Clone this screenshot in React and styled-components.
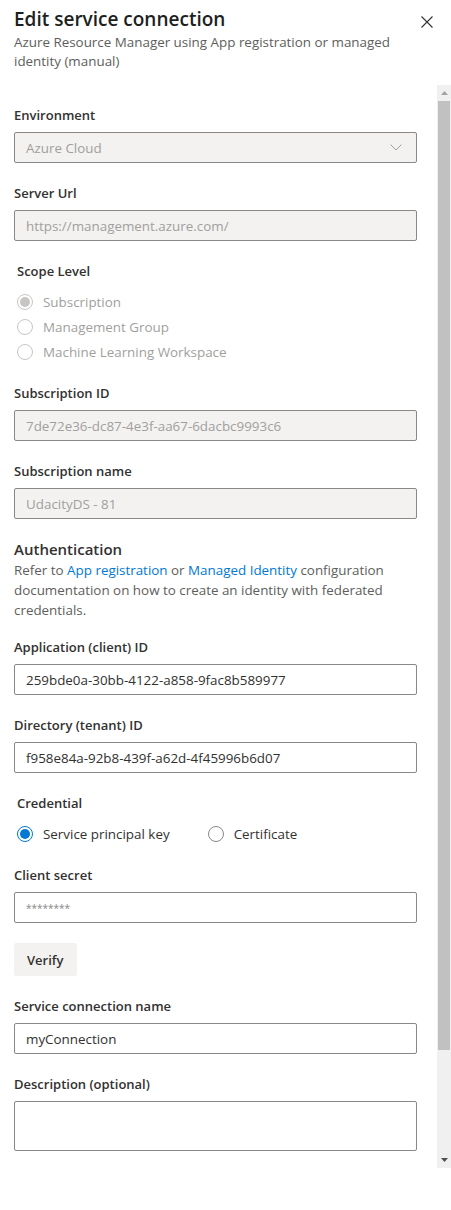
import React from "react";
import styled, { createGlobalStyle } from "styled-components";

const GlobalStyle = createGlobalStyle`
  html, body {
    margin: 0;
    padding: 0;
    background: #ffffff;
  }
  body {
    font-family: "Open Sans", "Noto Sans", sans-serif;
    color: #323130;
  }
  * {
    box-sizing: border-box;
  }
`;

const Panel = styled.div`
  width: 451px;
  height: 1210px;
  display: flex;
  flex-direction: column;
  background: #fff;
  overflow: hidden;
`;

const Header = styled.header`
  display: flex;
  justify-content: space-between;
  align-items: flex-start;
  padding: 5px 18px 14px 14px;
`;

const HeaderText = styled.div`
  display: flex;
  flex-direction: column;
  max-width: 396px;
`;

const Title = styled.h1`
  margin: 0;
  font-size: 19px;
  font-weight: 600;
  line-height: 28px;
  color: #201f1e;
`;

const Subtitle = styled.p`
  margin: 0;
  font-size: 13.4px;
  line-height: 19px;
  color: #605e5c;
`;

const CloseButton = styled.button`
  margin-top: 11px;
  width: 12px;
  height: 12px;
  padding: 0;
  border: none;
  background: none;
  display: flex;
  color: #323130;
`;

const Body = styled.div`
  display: flex;
  height: 1083px;
`;

const Scroller = styled.div`
  flex: 1;
  overflow: hidden;
  padding: 20px 20px 0 14px;
`;

const ScrollBar = styled.div`
  width: 14px;
  display: flex;
  flex-direction: column;
  background: #f0f0f0;
`;

const ScrollArrow = styled.div`
  height: ${(p) => p.$h}px;
  display: flex;
  align-items: center;
  justify-content: center;
`;

const ScrollThumb = styled.div`
  height: 949px;
  margin: 0 1px;
  background: #c1c1c1;
`;

const ScrollTrack = styled.div`
  flex: 1;
`;

const Field = styled.div`
  margin-bottom: 20px;
`;

const Label = styled.div`
  font-size: 13px;
  font-weight: 600;
  line-height: 20px;
  margin-bottom: ${(p) => (p.$group ? 8 : 7)}px;
  padding-left: ${(p) => (p.$group ? 3 : 0)}px;
  color: #323130;
`;

const InputBox = styled.div`
  width: 403px;
  height: ${(p) => p.$h || 31}px;
  display: flex;
  align-items: ${(p) => (p.$multi ? "flex-start" : "center")};
  justify-content: space-between;
  padding: 0 14px 0 11px;
  border: 1px solid #8a8886;
  border-radius: 2px;
  background: ${(p) => (p.$disabled ? "#f3f2f1" : "#ffffff")};
  color: ${(p) => (p.$disabled ? "#a19f9d" : "#323130")};
  font-size: 13.4px;
`;

const Masked = styled.span`
  color: #8a8886;
  font-size: 10px;
`;

const ChoiceGroup = styled.div`
  margin-bottom: ${(p) => p.$mb || 20}px;
`;

const Options = styled.div`
  display: flex;
  flex-direction: ${(p) => (p.$row ? "row" : "column")};
  gap: ${(p) => (p.$row ? 38 : 0)}px;
  padding-left: 3px;
`;

const Option = styled.label`
  height: 25px;
  display: flex;
  align-items: center;
  gap: 10px;
  font-size: 13.4px;
  color: ${(p) => (p.$disabled ? "#a19f9d" : "#323130")};
`;

const RadioCircle = styled.span`
  width: 16px;
  height: 16px;
  border-radius: 50%;
  flex-shrink: 0;
  border: 1px solid
    ${(p) => (p.$disabled ? "#c8c6c4" : p.$checked ? "#0078d4" : "#8a8886")};
  display: flex;
  align-items: center;
  justify-content: center;

  &::after {
    content: "";
    display: ${(p) => (p.$checked ? "block" : "none")};
    width: 10px;
    height: 10px;
    border-radius: 50%;
    background: ${(p) => (p.$disabled ? "#c8c6c4" : "#0078d4")};
  }
`;

const SectionTitle = styled.h2`
  margin: 0;
  font-size: 15px;
  font-weight: 600;
  line-height: 21px;
  color: #323130;
`;

const SectionText = styled.p`
  margin: 0 0 17px;
  font-size: 13.4px;
  line-height: 20px;
  color: #605e5c;
`;

const Link = styled.a`
  color: #0078d4;
  text-decoration: none;
`;

const Button = styled.button`
  height: 33px;
  padding: 0 13px;
  margin-bottom: 20px;
  border: none;
  border-radius: 2px;
  background: #f3f2f1;
  font-family: inherit;
  font-size: 13px;
  font-weight: 600;
  color: #323130;
`;

const Chevron = () => (
  <svg width="12" height="7" viewBox="0 0 12 7" fill="none">
    <path d="M0.5 0.5 L6 6 L11.5 0.5" stroke="#a19f9d" strokeWidth="1" />
  </svg>
);

const TextField = ({ label, value, disabled, h, multi, children }) => (
  <Field>
    <Label>{label}</Label>
    <InputBox $disabled={disabled} $h={h} $multi={multi}>
      {value}
      {children}
    </InputBox>
  </Field>
);

const Radio = ({ label, checked, disabled }) => (
  <Option $disabled={disabled}>
    <RadioCircle $checked={checked} $disabled={disabled} />
    {label}
  </Option>
);

export default function App() {
  return (
    <>
      <GlobalStyle />
      <Panel>
        <Header>
          <HeaderText>
            <Title>Edit service connection</Title>
            <Subtitle>
              Azure Resource Manager using App registration or managed identity
              (manual)
            </Subtitle>
          </HeaderText>
          <CloseButton aria-label="Close">
            <svg width="12" height="12" viewBox="0 0 12 12">
              <path d="M0.5 0.5 L11.5 11.5 M11.5 0.5 L0.5 11.5" stroke="#323130" strokeWidth="1.1" />
            </svg>
          </CloseButton>
        </Header>
        <Body>
          <Scroller>
            <TextField label="Environment" value="Azure Cloud" disabled>
              <Chevron />
            </TextField>
            <TextField label="Server Url" value="https://management.azure.com/" disabled />

            <ChoiceGroup $mb={19}>
              <Label $group>Scope Level</Label>
              <Options>
                <Radio label="Subscription" checked disabled />
                <Radio label="Management Group" disabled />
                <Radio label="Machine Learning Workspace" disabled />
              </Options>
            </ChoiceGroup>

            <TextField label="Subscription ID" value="7de72e36-dc87-4e3f-aa67-6dacbc9993c6" disabled />
            <TextField label="Subscription name" value="UdacityDS - 81" disabled />

            <SectionTitle>Authentication</SectionTitle>
            <SectionText>
              Refer to <Link href="#">App registration</Link> or{" "}
              <Link href="#">Managed Identity</Link> configuration documentation on
              how to create an identity with federated credentials.
            </SectionText>

            <TextField label="Application (client) ID" value="259bde0a-30bb-4122-a858-9fac8b589977" />
            <TextField label="Directory (tenant) ID" value="f958e84a-92b8-439f-a62d-4f45996b6d07" />

            <ChoiceGroup $mb={19}>
              <Label $group>Credential</Label>
              <Options $row>
                <Radio label="Service principal key" checked />
                <Radio label="Certificate" />
              </Options>
            </ChoiceGroup>

            <TextField label="Client secret">
              <Masked>********</Masked>
            </TextField>

            <Button>Verify</Button>

            <TextField label="Service connection name" value="myConnection" />
            <TextField label="Description (optional)" h={50} multi />
          </Scroller>
          <ScrollBar>
            <ScrollArrow $h={16}>
              <svg width="7" height="4" viewBox="0 0 7 4">
                <path d="M0 4 L3.5 0 L7 4 Z" fill="#a3a3a3" />
              </svg>
            </ScrollArrow>
            <ScrollThumb />
            <ScrollTrack />
            <ScrollArrow $h={17}>
              <svg width="7" height="4" viewBox="0 0 7 4">
                <path d="M0 0 L3.5 4 L7 0 Z" fill="#505050" />
              </svg>
            </ScrollArrow>
          </ScrollBar>
        </Body>
      </Panel>
    </>
  );
}
